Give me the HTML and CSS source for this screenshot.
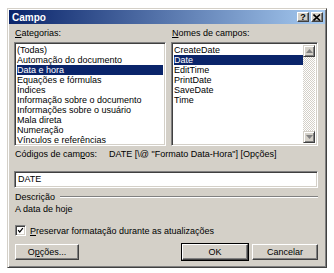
FILE: index.html
```html
<!DOCTYPE html>
<html>
<head>
<meta charset="utf-8">
<link rel="stylesheet" href="styles.css">
</head>
<body>
<div class="page">
  <div class="dialog">
    <div class="titlebar">
      <span class="title">Campo</span>
      <div class="tbtns">
        <span class="tbtn">?</span>
        <span class="tbtn">
          <svg width="8" height="7" viewBox="0 0 8 7"><path d="M0.5 0.5 L7 6.5 M7 0.5 L0.5 6.5" stroke="#000" stroke-width="1.6"/></svg>
        </span>
      </div>
    </div>
    <div class="body">
      <div class="cols">
        <div class="col col-left">
          <div class="label"><u>C</u>ategorias:</div>
          <div class="list">
            <div class="item">(Todas)</div>
            <div class="item">Automação do documento</div>
            <div class="item sel">Data e hora</div>
            <div class="item">Equações e fórmulas</div>
            <div class="item">Índices</div>
            <div class="item">Informação sobre o documento</div>
            <div class="item">Informações sobre o usuário</div>
            <div class="item">Mala direta</div>
            <div class="item">Numeração</div>
            <div class="item">Vínculos e referências</div>
          </div>
        </div>
        <div class="col col-right">
          <div class="label"><u>N</u>omes de campos:</div>
          <div class="list list-scroll">
            <div class="items">
              <div class="item">CreateDate</div>
              <div class="item sel">Date</div>
              <div class="item">EditTime</div>
              <div class="item">PrintDate</div>
              <div class="item">SaveDate</div>
              <div class="item">Time</div>
            </div>
            <div class="scrollbar">
              <div class="sbtn">
                <svg width="7" height="4" viewBox="0 0 7 4"><path d="M3.5 0 L7 4 L0 4 Z" fill="#808080"/></svg>
              </div>
              <div class="track"></div>
              <div class="sbtn">
                <svg width="7" height="4" viewBox="0 0 7 4"><path d="M0 0 L7 0 L3.5 4 Z" fill="#808080"/></svg>
              </div>
            </div>
          </div>
        </div>
      </div>
      <div class="codes">
        <span class="codes-label">Códigos de cam<u>p</u>os:</span>
        <span class="code">DATE [\@ "Formato Data-Hora"] [Opções]</span>
      </div>
      <div class="textbox">DATE</div>
      <div class="group">
        <span>Descrição</span>
        <span class="groove"></span>
      </div>
      <div class="desc">A data de hoje</div>
      <div class="check">
        <span class="box">
          <svg width="9" height="9" viewBox="0 0 9 9"><path d="M1.5 4 L3.5 6.5 L7.5 1.5" stroke="#000" stroke-width="1.6" fill="none"/></svg>
        </span>
        <span><u>P</u>reservar formatação durante as atualizações</span>
      </div>
      <div class="buttons">
        <div class="btn btn-opt">O<u>p</u>ções...</div>
        <div class="spacer"></div>
        <div class="btn btn-default">OK</div>
        <div class="btn">Cancelar</div>
      </div>
    </div>
  </div>
</div>
</body>
</html>
```

FILE: styles.css
```css
html, body {
  margin: 0;
  padding: 0;
  background: #ffffff;
}

body {
  font-family: "Liberation Sans", Arial, sans-serif;
  font-size: 9px;
  color: #000;
}

.page {
  padding: 8px 0 0 7px;
}

.dialog {
  width: 316px;
  height: 256px;
  background: #d4d0c8;
  border-top: 1px solid #d4d0c8;
  border-left: 1px solid #d4d0c8;
  border-right: 1px solid #404040;
  border-bottom: 1px solid #404040;
  box-shadow: inset 1px 1px 0 #ffffff, inset -1px -1px 0 #808080;
  padding: 1px;
  display: flex;
  flex-direction: column;
}

.titlebar {
  height: 14px;
  background: linear-gradient(to right, #0a246a, #a6caf0);
  display: flex;
  align-items: center;
  justify-content: space-between;
  padding: 0 2px 0 3px;
}

.title {
  color: #fff;
  font-weight: bold;
  font-size: 10px;
}

.tbtns {
  display: flex;
  gap: 2px;
}

.tbtn {
  width: 10px;
  height: 8px;
  background: #d4d0c8;
  border-top: 1px solid #fff;
  border-left: 1px solid #fff;
  border-right: 1px solid #404040;
  border-bottom: 1px solid #404040;
  box-shadow: inset -1px -1px 0 #808080;
  display: flex;
  align-items: center;
  justify-content: center;
  font-weight: bold;
  font-size: 9px;
  line-height: 8px;
}

.body {
  flex: 1;
  display: flex;
  flex-direction: column;
  padding: 4px 7px 0 5px;
}

.cols {
  display: flex;
  gap: 5px;
}

.col-left {
  width: 152px;
}

.col-right {
  flex: 1;
}

.label {
  height: 10px;
  line-height: 10px;
  padding-left: 1px;
  margin-bottom: 4px;
}

.list {
  height: 98px;
  background: #fff;
  border-top: 1px solid #808080;
  border-left: 1px solid #808080;
  border-right: 1px solid #fff;
  border-bottom: 1px solid #fff;
  box-shadow: inset 1px 1px 0 #404040, inset -1px -1px 0 #d4d0c8;
  padding: 2px;
  overflow: hidden;
}

.item {
  height: 10px;
  line-height: 10px;
  white-space: nowrap;
}

.item.sel {
  background: #0a246a;
  color: #fff;
}

.list-scroll {
  display: flex;
}

.items {
  flex: 1;
}

.scrollbar {
  width: 12px;
  display: flex;
  flex-direction: column;
}

.sbtn {
  height: 10px;
  background: #d4d0c8;
  border-top: 1px solid #d4d0c8;
  border-left: 1px solid #d4d0c8;
  border-right: 1px solid #404040;
  border-bottom: 1px solid #404040;
  box-shadow: inset 1px 1px 0 #fff, inset -1px -1px 0 #808080;
  display: flex;
  align-items: center;
  justify-content: center;
}

.track {
  flex: 1;
  background: repeating-conic-gradient(#ffffff 0 25%, #d4d0c8 0 50%) 0 0 / 2px 2px;
}

.codes {
  display: flex;
  height: 10px;
  line-height: 10px;
  margin-top: 3px;
  padding-left: 1px;
}

.codes-label {
  width: 94px;
}

.textbox {
  margin-top: 12px;
  height: 15px;
  line-height: 15px;
  background: #fff;
  border-top: 1px solid #808080;
  border-left: 1px solid #808080;
  border-right: 1px solid #fff;
  border-bottom: 1px solid #fff;
  box-shadow: inset 1px 1px 0 #404040, inset -1px -1px 0 #d4d0c8;
  padding-left: 3px;
}

.group {
  display: flex;
  align-items: center;
  gap: 5px;
  height: 10px;
  line-height: 10px;
  margin-top: 4px;
  padding-left: 1px;
}

.groove {
  flex: 1;
  height: 0;
  border-top: 1px solid #808080;
  border-bottom: 1px solid #fff;
}

.desc {
  height: 10px;
  line-height: 10px;
  margin-top: 2px;
  padding-left: 1px;
}

.check {
  display: flex;
  align-items: center;
  gap: 4px;
  height: 11px;
  margin-top: 11px;
  padding-left: 1px;
}

.box {
  width: 7px;
  height: 7px;
  background: #fff;
  border-top: 1px solid #808080;
  border-left: 1px solid #808080;
  border-right: 1px solid #fff;
  border-bottom: 1px solid #fff;
  box-shadow: inset 1px 1px 0 #404040, inset -1px -1px 0 #d4d0c8;
  padding: 1px;
  display: flex;
  align-items: center;
  justify-content: center;
}

.box svg {
  width: 7px;
  height: 7px;
}

.buttons {
  display: flex;
  gap: 4px;
  margin-top: 8px;
  padding-left: 1px;
}

.spacer {
  flex: 1;
}

.btn {
  width: 64px;
  height: 14px;
  line-height: 14px;
  text-align: center;
  background: #d4d0c8;
  border-top: 1px solid #fff;
  border-left: 1px solid #fff;
  border-right: 1px solid #404040;
  border-bottom: 1px solid #404040;
  box-shadow: inset -1px -1px 0 #808080;
}

.btn-opt {
  width: 62px;
}

.btn-default {
  outline: 1px solid #000;
  outline-offset: 0;
}
```
